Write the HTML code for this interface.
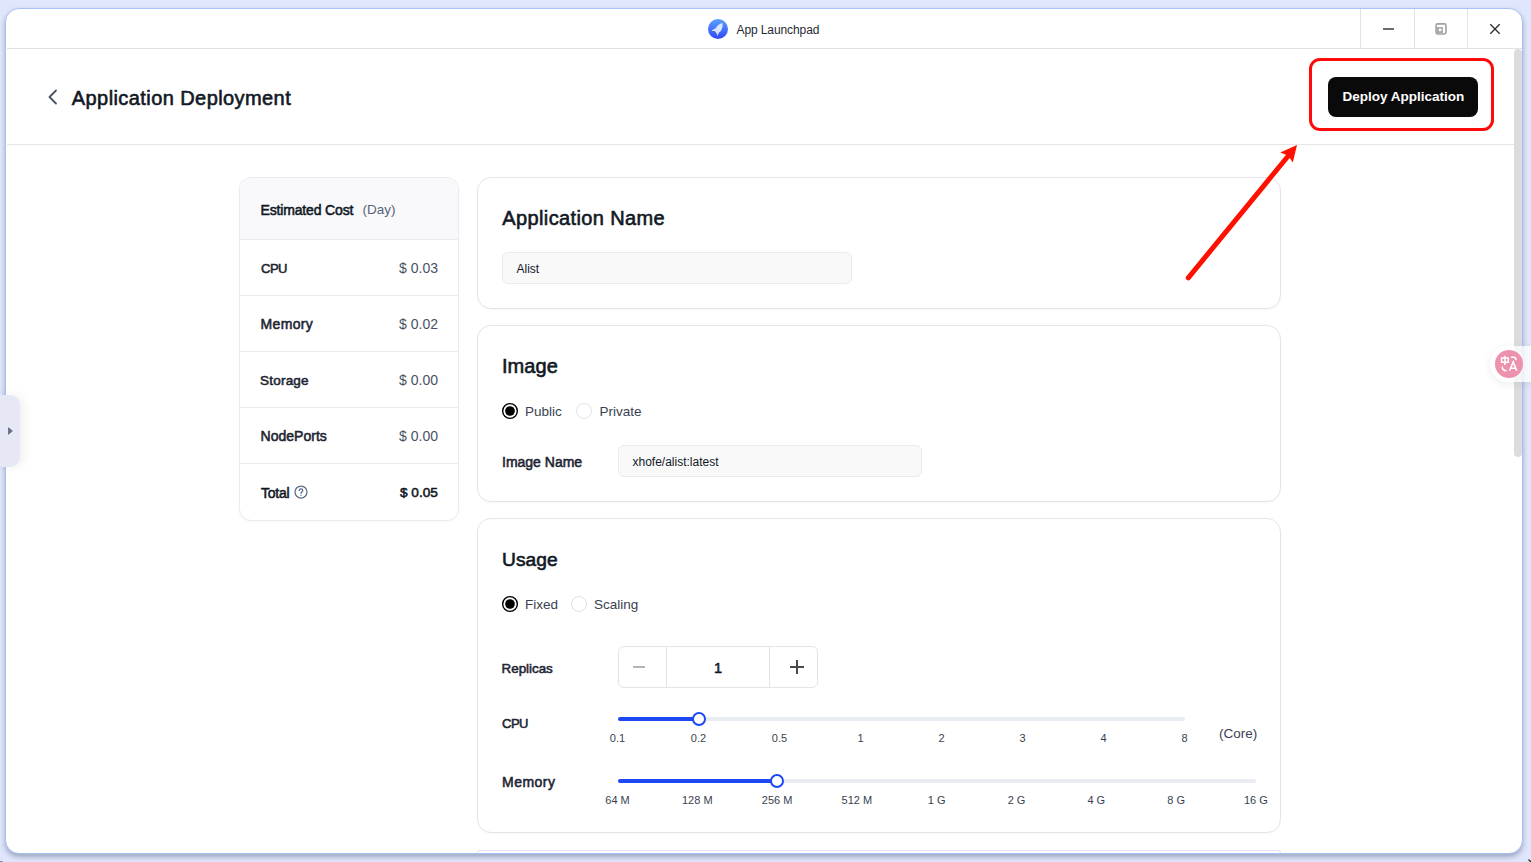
<!DOCTYPE html>
<html><head><meta charset="utf-8">
<style>
*{box-sizing:border-box;margin:0;padding:0}
html,body{width:1531px;height:862px;overflow:hidden;background:#e0e6fc;font-family:"Liberation Sans",sans-serif;color:#111824}
.a{position:absolute}
.t{position:absolute;white-space:nowrap;line-height:normal}
.card{position:absolute;border:1px solid #e4e5ea;border-radius:14px;background:#fff;box-shadow:0 1px 2px rgba(0,0,0,.03)}
.sep{position:absolute;top:9px;height:39px;width:1px;background:#e2e2e2}
.radio{position:absolute;width:16px;height:16px;border-radius:50%}
.on{border:1.8px solid #000;background:#fff}
.on:after{content:"";position:absolute;left:1.45px;top:1.45px;width:9.5px;height:9.5px;border-radius:50%;background:#000}
.off{border:1px solid #dfe3ec;background:#fff}
.inp{position:absolute;height:32px;border:1px solid #e8ebf0;border-radius:6px;background:#f9f9fa}
.track{position:absolute;height:4px;border-radius:2px;background:#e9ecf2}
.fill{position:absolute;height:4px;border-radius:2px;background:#1f48f5}
.thumb{position:absolute;width:14px;height:14px;border-radius:50%;border:2px solid #1f48f5;background:#fff}
</style></head>
<body>
<!-- window -->
<div class="a" style="left:5px;top:8px;width:1518px;height:846px;background:#fff;border:1px solid #a8c2f7;border-radius:14px;box-shadow:0 3px 5px rgba(70,80,110,.42)"></div>
<!-- title bar -->
<div class="a" style="left:7px;top:48px;width:1515px;height:1px;background:#e2e2e2"></div>
<div class="sep" style="left:1360px"></div>
<div class="sep" style="left:1414px"></div>
<div class="sep" style="left:1467px"></div>
<svg class="a" style="left:708px;top:19px" width="20" height="20" viewBox="0 0 20 20">
 <defs><linearGradient id="g1" x1="0" y1="0" x2="0" y2="1"><stop offset="0" stop-color="#5aa2ff"/><stop offset="1" stop-color="#2e47f6"/></linearGradient></defs>
 <circle cx="10" cy="10" r="10" fill="url(#g1)"/>
 <path d="M14.4 4 C11.4 4.6 8.8 6.8 7.4 9.6 L4.9 10.4 L3.6 12 L6.6 12 L7.8 13.3 L9.9 16.9 L10.5 13.9 C13.3 12.3 15.2 9.3 14.4 4 Z" fill="#eef3ff" opacity="0.88"/>
</svg>
<!-- window controls -->
<div class="a" style="left:1383px;top:28px;width:11px;height:2px;background:#6b6b6b"></div>
<svg class="a" style="left:1430px;top:18px" width="22" height="22" viewBox="0 0 22 22"><rect x="6.05" y="5.85" width="9.9" height="10.1" rx="1.6" fill="none" stroke="#a0a0a0" stroke-width="1.6"/><rect x="6.8" y="9" width="6.1" height="6.1" fill="#a8a8a8"/><rect x="8.8" y="10.6" width="2.6" height="2.5" fill="#fff"/></svg>
<svg class="a" style="left:1489px;top:23px" width="12" height="12" viewBox="0 0 12 12"><path d="M1.3 1.3 L10.7 10.7 M10.7 1.3 L1.3 10.7" stroke="#2a2a2a" stroke-width="1.3"/></svg>
<!-- header -->
<div class="a" style="left:7px;top:144px;width:1515px;height:1px;background:#e5e5e5"></div>
<svg class="a" style="left:46px;top:88px" width="14" height="18" viewBox="0 0 14 18"><path d="M10 2.5 L3.5 9 L10 15.5" fill="none" stroke="#485264" stroke-width="1.8" stroke-linecap="round" stroke-linejoin="round"/></svg>
<div class="a" style="left:1328px;top:77px;width:150px;height:40px;border-radius:8px;background:#0a0a0a"></div>
<!-- annotation -->
<div class="a" style="left:1309px;top:58.3px;width:184.5px;height:73px;border:3px solid #ff0a0a;border-radius:11px"></div>
<!-- scrollbar -->
<div class="a" style="left:1514px;top:49px;width:8px;height:408px;border-radius:4px;background:#dcdcdc"></div>
<!-- cost card -->
<div class="card" style="left:239px;top:177px;width:220px;height:344px;border-color:#e8ebf0;border-radius:12px;overflow:hidden">
  <div class="a" style="left:0;top:0;width:100%;height:62px;background:#f9f9fb;border-bottom:1px solid #e8ebf0"></div>
  <div class="a" style="left:0;top:117px;width:100%;height:1px;background:#e8ebf0"></div>
  <div class="a" style="left:0;top:173px;width:100%;height:1px;background:#e8ebf0"></div>
  <div class="a" style="left:0;top:229px;width:100%;height:1px;background:#e8ebf0"></div>
  <div class="a" style="left:0;top:285px;width:100%;height:1px;background:#e8ebf0"></div>
</div>
<svg class="a" style="left:294px;top:485px" width="14" height="14" viewBox="0 0 14 14"><circle cx="7" cy="7" r="6" fill="none" stroke="#5b6b88" stroke-width="1.25"/><path d="M5.2 5.4 C5.2 3.3 8.8 3.3 8.8 5.4 C8.8 6.8 7 6.7 7 8.3" fill="none" stroke="#5b6b88" stroke-width="1.25" stroke-linecap="round"/><circle cx="7" cy="10.3" r="0.7" fill="#5b6b88"/></svg>
<!-- main cards -->
<div class="card" style="left:477px;top:177px;width:804px;height:132px"></div>
<div class="inp" style="left:502px;top:252px;width:350px"></div>
<div class="card" style="left:477px;top:325px;width:804px;height:177px"></div>
<svg class="a" style="left:500.1px;top:401px" width="20" height="20" viewBox="0 0 20 20"><circle cx="10" cy="10" r="7.35" fill="#fff" stroke="#000" stroke-width="1.4"/><circle cx="10" cy="10" r="4.85" fill="#000"/></svg>
<svg class="a" style="left:573.9px;top:401px" width="20" height="20" viewBox="0 0 20 20"><circle cx="10" cy="10" r="7.5" fill="#fff" stroke="#dde2ec" stroke-width="1"/></svg>
<div class="inp" style="left:618px;top:445px;width:304px"></div>
<div class="card" style="left:477px;top:518px;width:804px;height:315px"></div>
<svg class="a" style="left:500.1px;top:594.1px" width="20" height="20" viewBox="0 0 20 20"><circle cx="10" cy="10" r="7.35" fill="#fff" stroke="#000" stroke-width="1.4"/><circle cx="10" cy="10" r="4.85" fill="#000"/></svg>
<svg class="a" style="left:569px;top:594.1px" width="20" height="20" viewBox="0 0 20 20"><circle cx="10" cy="10" r="7.5" fill="#fff" stroke="#dde2ec" stroke-width="1"/></svg>
<!-- stepper -->
<div class="a" style="left:618px;top:646px;width:200px;height:42px;border:1px solid #e4e4e7;border-radius:6px"></div>
<div class="a" style="left:666px;top:647px;width:1px;height:40px;background:#e4e4e7"></div>
<div class="a" style="left:769px;top:647px;width:1px;height:40px;background:#e4e4e7"></div>
<div class="a" style="left:633px;top:666px;width:12px;height:2px;background:#b4b4b4"></div>
<div class="a" style="left:790px;top:666px;width:14.2px;height:1.8px;background:#4a4a4a"></div>
<div class="a" style="left:796.1px;top:660px;width:1.8px;height:13.8px;background:#4a4a4a"></div>
<!-- sliders -->
<div class="track" style="left:618px;top:717px;width:567px"></div>
<div class="fill" style="left:618px;top:717px;width:81px"></div>
<div class="thumb" style="left:692px;top:712px"></div>
<div class="track" style="left:618px;top:779px;width:638px"></div>
<div class="fill" style="left:618px;top:779px;width:160px"></div>
<div class="thumb" style="left:770px;top:774px"></div>
<div class="card" style="left:477px;top:850px;width:804px;height:3px;border-bottom:0;border-radius:14px 14px 0 0;box-shadow:none"></div>
<div class="t" style="left:736.50px;top:23.14px;font-size:12px;color:#262a33;letter-spacing:-0.100px;">App Launchpad</div>
<div class="t" style="left:71.80px;top:86.50px;font-size:20px;-webkit-text-stroke:0.60px #111824;color:#111824;letter-spacing:0.419px;">Application Deployment</div>
<div class="t" style="left:1342.50px;top:88.78px;font-size:13.5px;font-weight:bold;color:#ffffff;">Deploy Application</div>
<div class="t" style="left:260.50px;top:201.53px;font-size:14px;-webkit-text-stroke:0.55px #111824;color:#111824;letter-spacing:-0.154px;">Estimated Cost</div>
<div class="t" style="left:362.50px;top:201.98px;font-size:13.5px;color:#5a6478;">(Day)</div>
<div class="t" style="left:261.00px;top:261.24px;font-size:13px;-webkit-text-stroke:0.55px #1d2532;color:#1d2532;letter-spacing:-0.500px;">CPU</div>
<div class="t" style="right:1093.00px;top:260.33px;font-size:14px;color:#485264;">$ 0.03</div>
<div class="t" style="left:260.50px;top:316.33px;font-size:14px;-webkit-text-stroke:0.55px #1d2532;color:#1d2532;letter-spacing:0.360px;">Memory</div>
<div class="t" style="right:1093.00px;top:316.33px;font-size:14px;color:#485264;">$ 0.02</div>
<div class="t" style="left:260.00px;top:372.78px;font-size:13.5px;-webkit-text-stroke:0.55px #1d2532;color:#1d2532;letter-spacing:0.217px;">Storage</div>
<div class="t" style="right:1093.00px;top:372.33px;font-size:14px;color:#485264;">$ 0.00</div>
<div class="t" style="left:260.50px;top:428.33px;font-size:14px;-webkit-text-stroke:0.55px #1d2532;color:#1d2532;letter-spacing:0.025px;">NodePorts</div>
<div class="t" style="right:1093.00px;top:428.33px;font-size:14px;color:#485264;">$ 0.00</div>
<div class="t" style="left:261.00px;top:485.13px;font-size:14px;-webkit-text-stroke:0.55px #111824;color:#111824;letter-spacing:-0.250px;">Total</div>
<div class="t" style="right:1093.20px;top:485.49px;font-size:13.6px;-webkit-text-stroke:0.55px #111824;color:#111824;">$ 0.05</div>
<div class="t" style="left:502.30px;top:206.90px;font-size:20px;-webkit-text-stroke:0.60px #111824;color:#111824;letter-spacing:0.373px;">Application Name</div>
<div class="t" style="left:516.50px;top:262.24px;font-size:12px;color:#111824;">Alist</div>
<div class="t" style="left:502.00px;top:354.90px;font-size:20px;-webkit-text-stroke:0.60px #111824;color:#111824;letter-spacing:0.050px;">Image</div>
<div class="t" style="left:525.00px;top:403.78px;font-size:13.5px;color:#383f50;">Public</div>
<div class="t" style="left:599.50px;top:403.78px;font-size:13.5px;color:#383f50;">Private</div>
<div class="t" style="left:502.00px;top:454.43px;font-size:14px;-webkit-text-stroke:0.55px #1d2532;color:#1d2532;">Image Name</div>
<div class="t" style="left:632.50px;top:455.04px;font-size:12px;color:#111824;">xhofe/alist:latest</div>
<div class="t" style="left:502.00px;top:548.52px;font-size:19.2px;-webkit-text-stroke:0.60px #111824;color:#111824;letter-spacing:0.025px;">Usage</div>
<div class="t" style="left:525.00px;top:596.78px;font-size:13.5px;color:#383f50;">Fixed</div>
<div class="t" style="left:594.00px;top:596.78px;font-size:13.5px;color:#383f50;">Scaling</div>
<div class="t" style="left:501.60px;top:661.17px;font-size:13.4px;-webkit-text-stroke:0.55px #1d2532;color:#1d2532;letter-spacing:-0.029px;">Replicas</div>
<div class="t" style="left:518.00px;width:400px;text-align:center;top:660.18px;font-size:14.5px;-webkit-text-stroke:0.55px #111824;color:#111824;">1</div>
<div class="t" style="left:502.00px;top:716.13px;font-size:13px;-webkit-text-stroke:0.55px #1d2532;color:#1d2532;letter-spacing:-0.500px;">CPU</div>
<div class="t" style="left:502.00px;top:774.33px;font-size:14px;-webkit-text-stroke:0.55px #1d2532;color:#1d2532;letter-spacing:0.480px;">Memory</div>
<div class="t" style="left:1219.00px;top:725.58px;font-size:13.5px;color:#383f50;">(Core)</div>
<div class="t" style="left:417.50px;width:400px;text-align:center;top:732.04px;font-size:11px;color:#383f50;">0.1</div>
<div class="t" style="left:498.50px;width:400px;text-align:center;top:732.04px;font-size:11px;color:#383f50;">0.2</div>
<div class="t" style="left:579.50px;width:400px;text-align:center;top:732.04px;font-size:11px;color:#383f50;">0.5</div>
<div class="t" style="left:660.50px;width:400px;text-align:center;top:732.04px;font-size:11px;color:#383f50;">1</div>
<div class="t" style="left:741.50px;width:400px;text-align:center;top:732.04px;font-size:11px;color:#383f50;">2</div>
<div class="t" style="left:822.50px;width:400px;text-align:center;top:732.04px;font-size:11px;color:#383f50;">3</div>
<div class="t" style="left:903.50px;width:400px;text-align:center;top:732.04px;font-size:11px;color:#383f50;">4</div>
<div class="t" style="left:984.50px;width:400px;text-align:center;top:732.04px;font-size:11px;color:#383f50;">8</div>
<div class="t" style="left:417.50px;width:400px;text-align:center;top:793.94px;font-size:11px;color:#383f50;">64 M</div>
<div class="t" style="left:497.30px;width:400px;text-align:center;top:793.94px;font-size:11px;color:#383f50;">128 M</div>
<div class="t" style="left:577.10px;width:400px;text-align:center;top:793.94px;font-size:11px;color:#383f50;">256 M</div>
<div class="t" style="left:656.90px;width:400px;text-align:center;top:793.94px;font-size:11px;color:#383f50;">512 M</div>
<div class="t" style="left:736.70px;width:400px;text-align:center;top:793.94px;font-size:11px;color:#383f50;">1 G</div>
<div class="t" style="left:816.50px;width:400px;text-align:center;top:793.94px;font-size:11px;color:#383f50;">2 G</div>
<div class="t" style="left:896.30px;width:400px;text-align:center;top:793.94px;font-size:11px;color:#383f50;">4 G</div>
<div class="t" style="left:976.10px;width:400px;text-align:center;top:793.94px;font-size:11px;color:#383f50;">8 G</div>
<div class="t" style="left:1055.90px;width:400px;text-align:center;top:793.94px;font-size:11px;color:#383f50;">16 G</div>
<!-- left toggle -->
<div class="a" style="left:-10px;top:395px;width:30px;height:72px;border-radius:10px;background:#e6e9f5;box-shadow:4px 0 10px rgba(0,0,0,.06)"></div>
<svg class="a" style="left:7px;top:426px" width="8" height="10" viewBox="0 0 8 10"><path d="M1.5 1.7 L5.4 5 L1.5 8.3 Z" fill="#65708a" stroke="#65708a" stroke-width="0.9" stroke-linejoin="round"/></svg>
<!-- translate float -->
<div class="a" style="left:1490px;top:346px;width:60px;height:36px;border-radius:18px;background:rgba(255,255,255,.75);box-shadow:0 2px 8px rgba(0,0,0,.08)"></div>
<svg class="a" style="left:1495px;top:350px" width="28" height="28" viewBox="0 0 28 28">
 <circle cx="14" cy="14" r="14" fill="#ed92ac"/>
 <g fill="none" stroke="#fff" stroke-width="1.5">
  <path d="M6.6 8 H13.3 V12.3 H6.6 Z M9.95 5.8 V15"/>
  <path d="M16 7.2 H19 C20.3 7.2 21 8 21 10.2"/>
  <path d="M7.2 16.5 C7.2 19.5 8.5 20.7 11.5 20.7"/>
  <path d="M14.6 20.8 L18.2 12 L21.7 20.8 M15.8 18.2 H20.5" stroke-width="1.6"/>
 </g>
</svg>
<svg class="a" style="left:0;top:0" width="1531" height="862">
 <path d="M1188.3 277.8 L1289 155" stroke="#ff1000" stroke-width="5" stroke-linecap="round"/>
 <path d="M1297 145 L1280.3 152.4 L1288 155.5 L1292.8 162.6 Z" fill="#ff1000"/>
</svg>
<svg class="a" style="left:1524px;top:855px" width="7" height="7" viewBox="0 0 7 7"><path d="M3.2 3.5 L7 7 L7 4.2 Z" fill="#f4f4f4"/><path d="M4 5 L6 7 L7 7 L7 6 L5 4 Z" fill="#2a2a2a"/></svg>
<div class="a" style="left:0;top:860.5px;width:2.5px;height:1.5px;background:rgba(60,70,80,.55);border-radius:0 2px 0 0"></div>
</body></html>
